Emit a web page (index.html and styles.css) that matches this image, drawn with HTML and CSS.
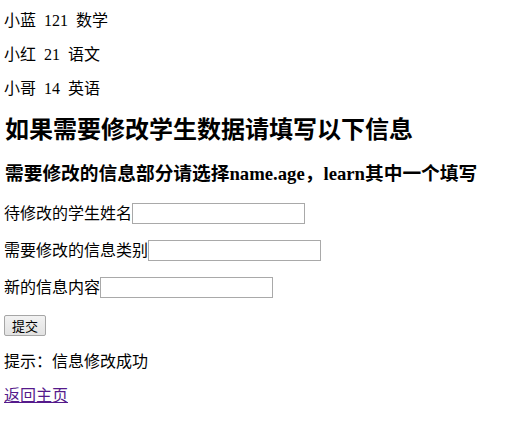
FILE: index.html
```html
<!DOCTYPE html>
<html lang="zh">
<head>
<meta charset="utf-8">
<title>学生信息</title>
<link rel="stylesheet" href="styles.css">
</head>
<body>
<div class="page">
  <p class="row">小蓝 121 数学</p>
  <p class="row">小红 21 语文</p>
  <p class="row">小哥 14 英语</p>
  <h2 class="title">如果需要修改学生数据请填写以下信息</h2>
  <h3 class="subtitle">需要修改的信息部分请选择name.age，learn其中一个填写</h3>
  <form class="form">
    <p class="field"><label>待修改的学生姓名</label><input type="text" class="input"></p>
    <p class="field"><label>需要修改的信息类别</label><input type="text" class="input"></p>
    <p class="field"><label>新的信息内容</label><input type="text" class="input"></p>
    <p class="field field-btn"><button type="button" class="btn">提交</button></p>
  </form>
  <p class="row tip">提示：信息修改成功</p>
  <a class="back" href="#">返回主页</a>
</div>
</body>
</html>
```
FILE: styles.css
```css
html, body {
  margin: 0;
  padding: 0;
  background: #fff;
}
body {
  font-family: "Liberation Serif", "Noto Sans CJK SC", serif;
  font-size: 16px;
  color: #000;
}
.page {
  padding: 0 4px;
  display: flow-root;
}
.row {
  margin: 12px 0 16px;
  line-height: 18px;
  word-spacing: 4px;
}
.row + .row {
  margin-top: 16px;
}
.title {
  font-size: 24px;
  line-height: 26px;
  font-weight: bold;
  margin: 19px 0 20px;
  padding-left: 1px;
}
.subtitle {
  font-size: 18.72px;
  line-height: 22px;
  font-weight: bold;
  margin: 18px 0 18px;
  padding-left: 1px;
}
.form {
  margin: 0;
}
.field {
  margin: 0 0 16px;
  height: 21px;
  line-height: 21px;
  display: flex;
  align-items: center;
}
.field-btn {
  height: 22px;
  align-items: flex-end;
}
.input {
  box-sizing: border-box;
  width: 173px;
  height: 21px;
  border: 1px solid #a9a9a9;
  margin: 0;
  padding: 0 2px;
  font-size: 13px;
}
.btn {
  box-sizing: border-box;
  width: 42px;
  height: 21px;
  margin: 0;
  padding: 0;
  border: 1px solid #a6a6a6;
  border-radius: 2px;
  background: linear-gradient(#f2f2f2, #e2e2e2);
  font-family: "Noto Sans CJK SC", sans-serif;
  font-size: 13px;
  line-height: 19px;
  color: #000;
}
.tip {
  margin-top: 17px;
}
.back {
  display: block;
  width: max-content;
  line-height: 18px;
  margin-top: 1px;
  color: #551a8b;
  text-decoration: underline;
}
```
